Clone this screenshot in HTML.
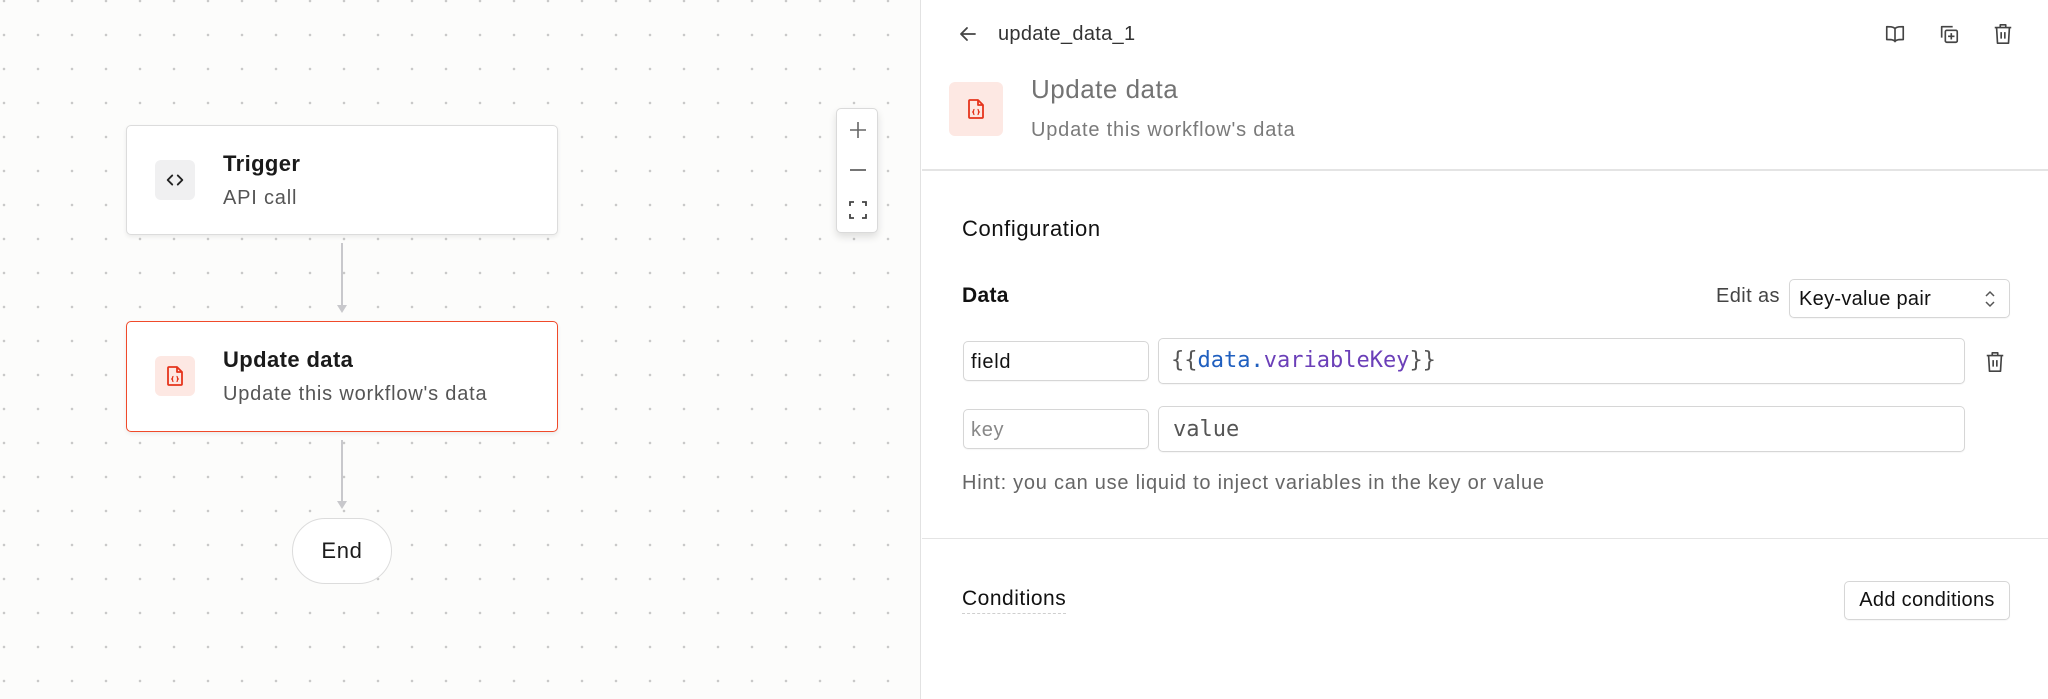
<!DOCTYPE html>
<html><head><meta charset="utf-8"><style>
*{box-sizing:border-box;margin:0;padding:0}
body{width:2048px;height:699px;overflow:hidden;font-family:"Liberation Sans",sans-serif;background:#fff;position:relative;color:#1c1c1c;letter-spacing:0.7px}
.canvas{position:absolute;left:0;top:0;width:921px;height:699px;background-color:#fcfcfb;background-image:radial-gradient(circle,#c9c9c9 1.1px,transparent 1.5px);background-size:34px 34px;background-position:-13px -16px;border-right:1px solid #e2e2e2}
.card{position:absolute;left:126px;width:432px;background:#fff;border:1px solid #dcdcdc;border-radius:5px;box-shadow:0 2px 4px rgba(0,0,0,.07)}
.card .ic{position:absolute;left:28px;top:34px;width:40px;height:40px;border-radius:6px;display:flex;align-items:center;justify-content:center}
.card .t{position:absolute;left:96px;top:25px;font-size:22px;font-weight:600;color:#1a1a1a;letter-spacing:0.4px}
.card .s{position:absolute;left:96px;top:61px;font-size:20px;color:#555;letter-spacing:0.8px}
.line{position:absolute;left:341px;width:2px;background:#c8c8cc}
.abs{position:absolute}
.input{position:absolute;border:1px solid #d6d6d6;border-radius:5px;background:#fff;box-shadow:0 1px 1px rgba(0,0,0,.04)}
.mono{font-family:"DejaVu Sans Mono","Liberation Mono",monospace;letter-spacing:0}
</style></head><body>
<div class="canvas"></div>

<div class="card" style="top:125px;height:110px">
 <div class="ic" style="background:#f0f0f1"><svg width="22" height="22" viewBox="0 0 24 24" fill="none" stroke="#222" stroke-width="2" stroke-linecap="round" stroke-linejoin="round"><path d="M9 7l-5 5 5 5M15 7l5 5-5 5"/></svg></div>
 <div class="t">Trigger</div><div class="s">API call</div>
</div>
<div class="line" style="top:243px;height:68px"></div>
<svg class="abs" style="left:336px;top:304px" width="12" height="10"><path d="M1 1h10L6 9z" fill="#c8c8cc"/></svg>

<div class="card" style="top:321px;height:111px;border:1.5px solid #f04a2a">
 <div class="ic" style="background:#fde8e3"><svg width="20" height="22" viewBox="0 0 20 22" fill="none" stroke="#e5341c" stroke-width="1.8" stroke-linejoin="round"><path d="M4 2h8l5 5v12a1 1 0 0 1-1 1H4a1 1 0 0 1-1-1V3a1 1 0 0 1 1-1zM12 2v5h5"/><path d="M8.5 11.5c-1 0-1 .7-1 1.5s-.6 1-.9 1c.3 0 .9.2.9 1s0 1.5 1 1.5M11.5 11.5c1 0 1 .7 1 1.5s.6 1 .9 1c-.3 0-.9.2-.9 1s0 1.5-1 1.5" stroke-width="1.3"/></svg></div>
 <div class="t">Update data</div><div class="s">Update this workflow's data</div>
</div>
<div class="line" style="top:440px;height:66px"></div>
<svg class="abs" style="left:336px;top:500px" width="12" height="10"><path d="M1 1h10L6 9z" fill="#c8c8cc"/></svg>
<div class="abs" style="left:292px;top:518px;width:100px;height:66px;border:1px solid #dcdcdc;border-radius:33px;background:#fff;display:flex;align-items:center;justify-content:center;font-size:22px">End</div>

<div class="abs" style="left:836px;top:108px;width:42px;height:125px;background:#fff;border:1px solid #dadada;border-radius:5px;box-shadow:0 4px 8px rgba(0,0,0,.12)">
 <svg class="abs" style="left:11px;top:11px" width="20" height="20" viewBox="0 0 20 20" stroke="#666" stroke-width="1.6"><path d="M10 2v16M2 10h16"/></svg>
 <svg class="abs" style="left:11px;top:51px" width="20" height="20" viewBox="0 0 20 20" stroke="#666" stroke-width="1.8"><path d="M2 10h16"/></svg>
 <svg class="abs" style="left:11px;top:91px" width="20" height="20" viewBox="0 0 20 20" fill="none" stroke="#444" stroke-width="1.8"><path d="M2 6V2h4M14 2h4v4M18 14v4h-4M6 18H2v-4"/></svg>
</div>

<svg class="abs" style="left:958px;top:24px" width="20" height="20" viewBox="0 0 20 20" fill="none" stroke="#444" stroke-width="1.8" stroke-linecap="round" stroke-linejoin="round"><path d="M17 10H3M9 4l-6 6 6 6"/></svg>
<div class="abs" style="left:998px;top:23px;font-size:20px;color:#333;letter-spacing:0.3px">update_data_1</div>
<svg class="abs" style="left:1884px;top:23px" width="22" height="22" viewBox="0 0 24 24" fill="none" stroke="#444" stroke-width="1.8" stroke-linejoin="round"><path d="M12 6c-2-2-5-2-9-2v14c4 0 7 0 9 2 2-2 5-2 9-2V4c-4 0-7 0-9 2zM12 6v15"/></svg>
<svg class="abs" style="left:1938px;top:23px" width="22" height="22" viewBox="0 0 24 24" fill="none" stroke="#444" stroke-width="1.8" stroke-linejoin="round"><path d="M4 16V4h12"/><rect x="8" y="8" width="13" height="13" rx="1.5"/><path d="M14.5 11v7M11 14.5h7"/></svg>
<svg class="abs" style="left:1992px;top:22px" width="22" height="24" viewBox="0 0 24 24" fill="none" stroke="#444" stroke-width="1.8" stroke-linejoin="round"><path d="M3 5h18M9 5V2h6v3M5 5l1 17h12l1-17M10 10v7M14 10v7"/></svg>

<div class="abs" style="left:949px;top:82px;width:54px;height:54px;background:#fde8e3;border-radius:6px;display:flex;align-items:center;justify-content:center"><svg width="20" height="22" viewBox="0 0 20 22" fill="none" stroke="#e5341c" stroke-width="1.8" stroke-linejoin="round"><path d="M4 2h8l5 5v12a1 1 0 0 1-1 1H4a1 1 0 0 1-1-1V3a1 1 0 0 1 1-1zM12 2v5h5"/><path d="M8.5 11.5c-1 0-1 .7-1 1.5s-.6 1-.9 1c.3 0 .9.2.9 1s0 1.5 1 1.5M11.5 11.5c1 0 1 .7 1 1.5s.6 1 .9 1c-.3 0-.9.2-.9 1s0 1.5-1 1.5" stroke-width="1.3"/></svg></div>
<div class="abs" style="left:1031px;top:74px;font-size:26px;color:#737373;letter-spacing:0.5px">Update data</div>
<div class="abs" style="left:1031px;top:119px;font-size:20px;color:#7a7a7a;letter-spacing:0.8px">Update this workflow's data</div>
<div class="abs" style="left:922px;top:169px;width:1126px;height:2px;background:#e4e4e4"></div>

<div class="abs" style="left:962px;top:216px;font-size:22px;color:#111;letter-spacing:0.6px">Configuration</div>
<div class="abs" style="left:962px;top:284px;font-size:21px;font-weight:600;color:#111;letter-spacing:0.3px">Data</div>
<div class="abs" style="left:1716px;top:285px;font-size:20px;color:#444;letter-spacing:0.4px">Edit as</div>
<div class="input" style="left:1789px;top:279px;width:221px;height:39px"><span class="abs" style="left:9px;top:8px;font-size:20px;color:#111;letter-spacing:0.3px">Key-value pair</span>
<svg class="abs" style="left:193px;top:10px" width="14" height="18" viewBox="0 0 14 18" fill="none" stroke="#555" stroke-width="1.5"><path d="M3 6l4-4 4 4M3 12l4 4 4-4"/></svg></div>

<div class="input" style="left:963px;top:341px;width:186px;height:40px"><span class="abs" style="left:7px;top:9px;font-size:20px;color:#111">field</span></div>
<div class="input" style="left:1158px;top:338px;width:807px;height:46px"><span class="abs mono" style="left:12px;top:9px;font-size:22px;color:#555">{{<span style="color:#1f5fbf">data</span><span style="color:#1f5fbf">.</span><span style="color:#6b3fb8">variableKey</span>}}</span></div>
<svg class="abs" style="left:1984px;top:350px" width="22" height="24" viewBox="0 0 24 24" fill="none" stroke="#444" stroke-width="1.8" stroke-linejoin="round"><path d="M3 5h18M9 5V2h6v3M5 5l1 17h12l1-17M10 10v7M14 10v7"/></svg>

<div class="input" style="left:963px;top:409px;width:186px;height:40px"><span class="abs" style="left:7px;top:9px;font-size:20px;color:#888">key</span></div>
<div class="input" style="left:1158px;top:406px;width:807px;height:46px"><span class="abs mono" style="left:14px;top:10px;font-size:22px;color:#555">value</span></div>

<div class="abs" style="left:962px;top:472px;font-size:20px;color:#666;letter-spacing:0.75px">Hint: you can use liquid to inject variables in the key or value</div>
<div class="abs" style="left:922px;top:538px;width:1126px;height:1px;background:#e4e4e4"></div>

<div class="abs" style="left:962px;top:587px;font-size:21px;color:#111;border-bottom:1.5px dashed #cfcfcf;padding-bottom:2px;letter-spacing:0.5px">Conditions</div>
<div class="input" style="left:1844px;top:581px;width:166px;height:39px;display:flex;align-items:center;justify-content:center;font-size:20px;color:#111;letter-spacing:0.3px">Add conditions</div>
</body></html>
